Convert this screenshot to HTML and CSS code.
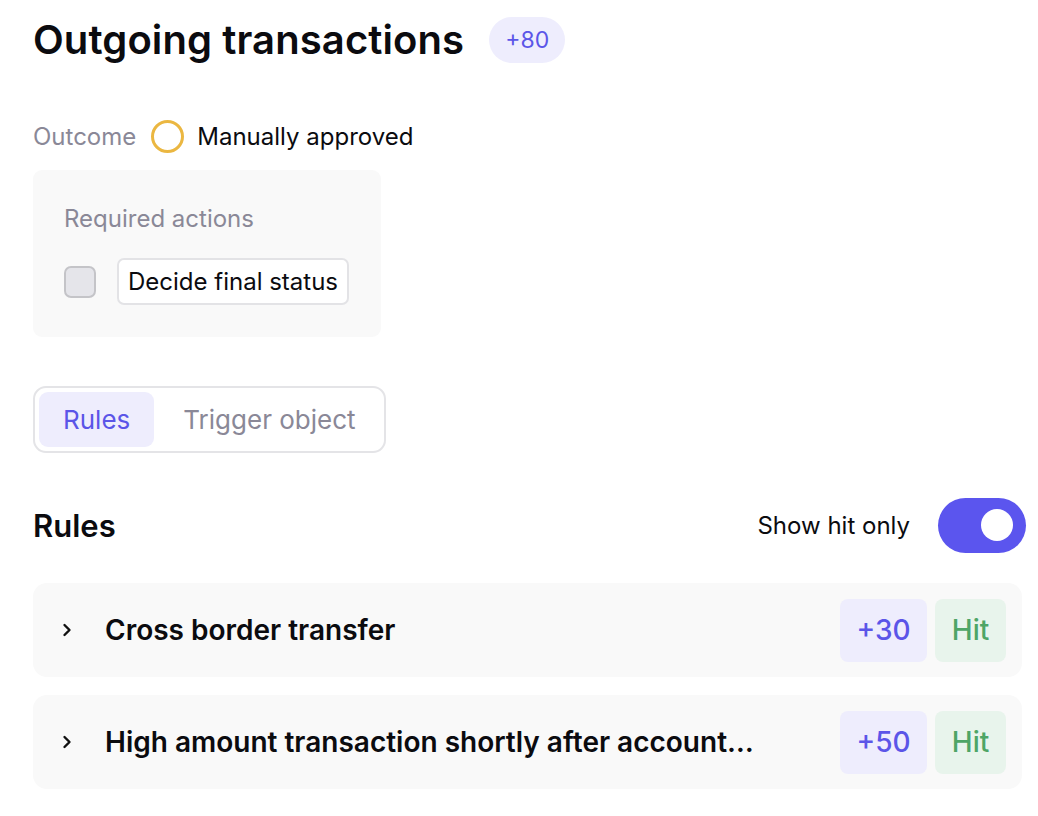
FILE: index.html
```html
<!DOCTYPE html>
<html>
<head>
<meta charset="utf-8">
<link rel="stylesheet" href="styles.css">
</head>
<body>
<div class="page">
  <div class="title-row">
    <h1 class="title">Outgoing transactions</h1>
    <span class="score-pill">+80</span>
  </div>

  <div class="outcome-row">
    <span class="muted">Outcome</span>
    <span class="ring"></span>
    <span class="outcome-value">Manually approved</span>
  </div>

  <div class="actions-box">
    <div class="muted">Required actions</div>
    <div class="action-row">
      <span class="checkbox"></span>
      <button class="action-btn">Decide final status</button>
    </div>
  </div>

  <div class="tabs">
    <span class="tab active">Rules</span>
    <span class="tab">Trigger object</span>
  </div>

  <div class="rules-header">
    <h2 class="rules-title">Rules</h2>
    <div class="hit-toggle">
      <span>Show hit only</span>
      <span class="toggle"><span class="knob"></span></span>
    </div>
  </div>

  <div class="rule-list">
    <div class="rule-card">
      <svg class="chev" width="14" height="16" viewBox="0 0 14 16"><path d="M4.5 3l5 5-5 5" fill="none" stroke="#111" stroke-width="2.4" stroke-linecap="round" stroke-linejoin="round"/></svg>
      <span class="rule-name">Cross border transfer</span>
      <span class="tag score">+30</span>
      <span class="tag hit">Hit</span>
    </div>
    <div class="rule-card">
      <svg class="chev" width="14" height="16" viewBox="0 0 14 16"><path d="M4.5 3l5 5-5 5" fill="none" stroke="#111" stroke-width="2.4" stroke-linecap="round" stroke-linejoin="round"/></svg>
      <span class="rule-name">High amount transaction shortly after account creation</span>
      <span class="tag score">+50</span>
      <span class="tag hit">Hit</span>
    </div>
  </div>
</div>
</body>
</html>
```

FILE: styles.css
```css
* { box-sizing: border-box; }
html, body { margin: 0; padding: 0; background: #fff; }
body {
  font-family: Inter, "Noto Sans", sans-serif;
  color: #0b0b0f;
}
.page {
  width: 1038px;
  padding: 17px 12px 0 33px;
}
.title-row {
  display: flex;
  align-items: center;
  gap: 25px;
  height: 46px;
}
.title {
  margin: 0;
  font-size: 40px;
  font-weight: 600;
  line-height: 46px;
  letter-spacing: 0.1px;
}
.score-pill {
  height: 46px;
  padding: 0 16px;
  border-radius: 23px;
  background: #eeedfd;
  color: #5b55e8;
  font-size: 23px;
  display: inline-flex;
  align-items: center;
}
.outcome-row {
  margin-top: 56px;
  display: flex;
  align-items: center;
  height: 34px;
  font-size: 24px;
}
.muted { color: #8a8897; font-size: 24px; }
.ring {
  width: 33px;
  height: 33px;
  border: 3.5px solid #ebb741;
  border-radius: 50%;
  margin: 0 13px 0 15px;
}
.outcome-value { color: #0b0b0f; }
.actions-box {
  margin-top: 17px;
  width: 348px;
  height: 167px;
  background: #f9f9f9;
  border-radius: 9px;
  padding: 34px 20px 0 31px;
}
.actions-box .muted { line-height: 30px; }
.action-row {
  margin-top: 24px;
  display: flex;
  align-items: center;
  gap: 21px;
}
.checkbox {
  flex: none;
  width: 32px;
  height: 32px;
  border-radius: 7px;
  background: #e5e5ea;
  border: 2px solid #c4c4c8;
}
.action-btn {
  height: 47px;
  padding: 0 9px;
  background: #fff;
  border: 2px solid #e3e3e6;
  border-radius: 7px;
  font-family: inherit;
  font-size: 24px;
  color: #0b0b0f;
  white-space: nowrap;
}
.tabs {
  margin-top: 49px;
  display: inline-flex;
  border: 2px solid #e4e4e7;
  border-radius: 13px;
  padding: 4px;
  height: 67px;
}
.tab {
  display: flex;
  align-items: center;
  padding: 0 24px;
  font-size: 26px;
  color: #8a8897;
  border-radius: 9px;
}
.tab.active {
  background: #eeedfd;
  color: #5b55e8;
  padding: 0 24px;
  margin-right: 5px;
}
.rules-header {
  margin-top: 44px;
  display: flex;
  align-items: center;
  justify-content: space-between;
  height: 56px;
}
.rules-title {
  margin: 0;
  font-size: 31px;
  font-weight: 600;
}
.hit-toggle {
  display: flex;
  align-items: center;
  gap: 28px;
  font-size: 24px;
}
.toggle {
  width: 88px;
  height: 55px;
  border-radius: 28px;
  background: #5b55ee;
  display: flex;
  align-items: center;
  justify-content: flex-end;
  padding-right: 13px;
}
.knob {
  width: 32px;
  height: 32px;
  border-radius: 50%;
  background: #fff;
}
.rule-list {
  margin-top: 30px;
  display: flex;
  flex-direction: column;
  gap: 18px;
  width: 989px;
}
.rule-card {
  height: 94px;
  background: #f9f9f9;
  border-radius: 14px;
  display: flex;
  align-items: center;
  padding: 0 16px 0 27px;
}
.chev { flex: none; }
.rule-name {
  margin-left: 31px;
  flex: 0 1 652px;
  min-width: 0;
  white-space: nowrap;
  overflow: hidden;
  text-overflow: ellipsis;
  font-size: 28px;
  font-weight: 600;
}
.tag {
  height: 63px;
  border-radius: 8px;
  display: flex;
  align-items: center;
  justify-content: center;
  font-size: 28px;
  font-weight: 500;
}
.tag.score {
  margin-left: auto;
  width: 87px;
  background: #eeedfd;
  color: #5b55e8;
}
.tag.hit {
  margin-left: 8px;
  width: 71px;
  background: #e8f4ec;
  color: #4ea566;
}
```
